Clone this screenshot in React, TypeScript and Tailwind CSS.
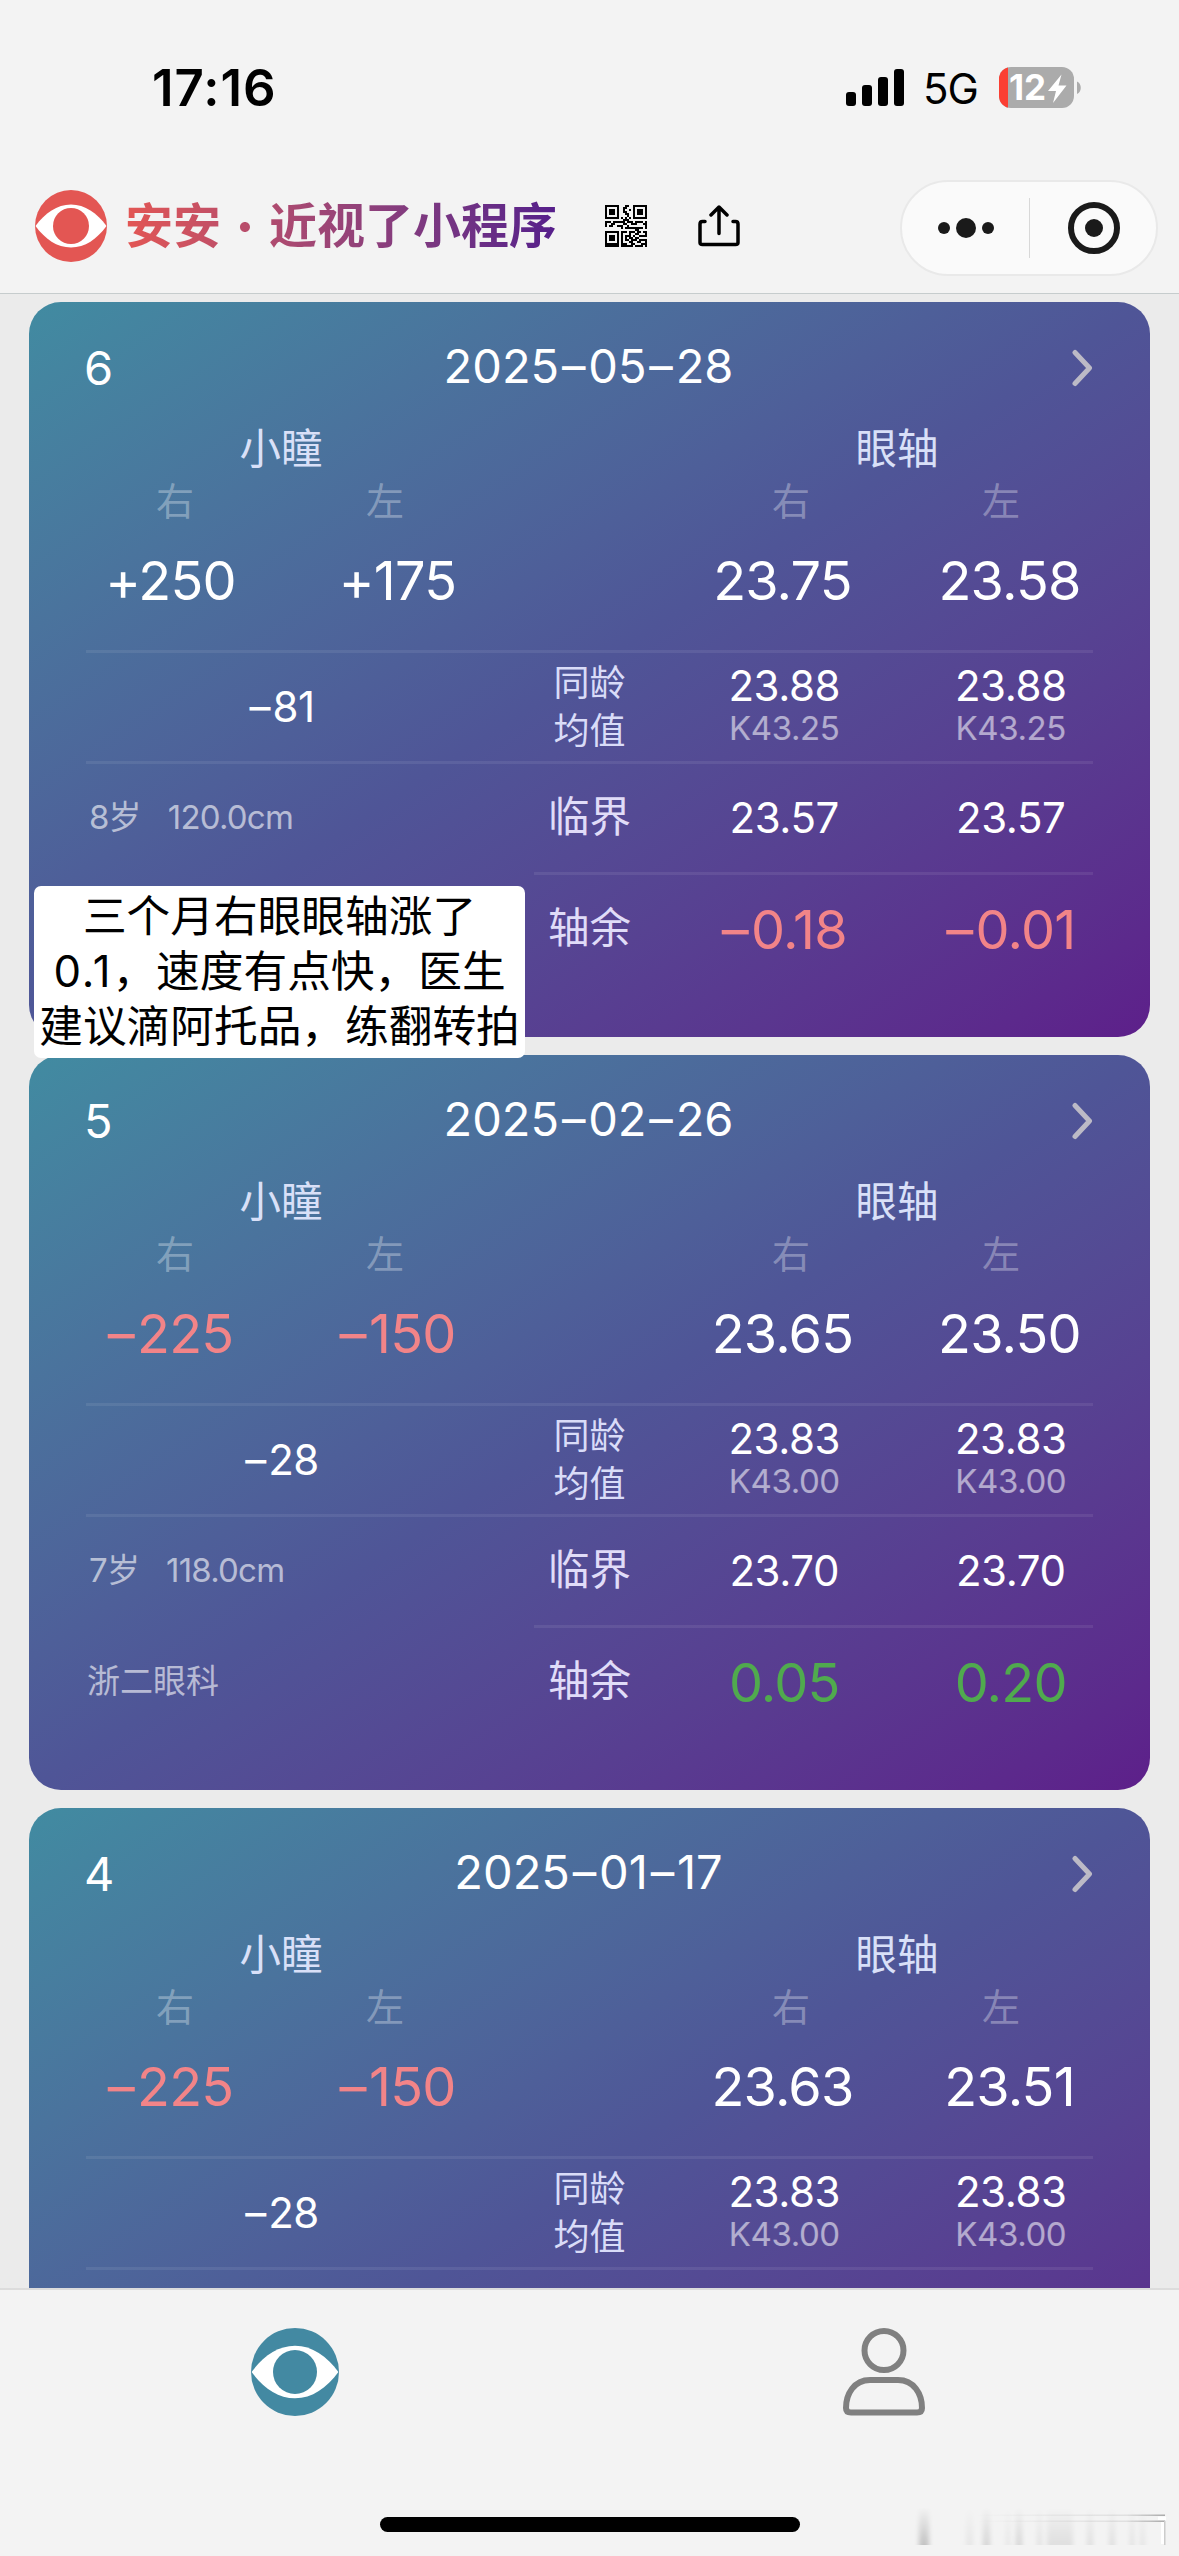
import {Fragment} from "react";
import clsx from "clsx";

type Tone = "plain" | "bad" | "good";

interface Exam {
    id: number;
    date: string;
    pupil: [string, string];
    axis: [string, string];
    pupilTone: Tone;
    delta: string;
    mean: string;
    k: string;
    detail?: {
        limit: string;
        rest: [string, string];
        restTone: Tone;
        age: string;
        height: string;
        clinic?: string;
    };
}

const exams: Exam[] = [
    {
        id: 6,
        date: "2025–05–28",
        pupil: ["+250", "+175"],
        axis: ["23.75", "23.58"],
        pupilTone: "plain",
        delta: "–81",
        mean: "23.88",
        k: "K43.25",
        detail: {
            limit: "23.57",
            rest: ["–0.18", "–0.01"],
            restTone: "bad",
            age: "8岁",
            height: "120.0cm"
        }
    },
    {
        id: 5,
        date: "2025–02–26",
        pupil: ["–225", "–150"],
        axis: ["23.65", "23.50"],
        pupilTone: "bad",
        delta: "–28",
        mean: "23.83",
        k: "K43.00",
        detail: {
            limit: "23.70",
            rest: ["0.05", "0.20"],
            restTone: "good",
            age: "7岁",
            height: "118.0cm",
            clinic: "浙二眼科"
        }
    },
    {
        id: 4,
        date: "2025–01–17",
        pupil: ["–225", "–150"],
        axis: ["23.63", "23.51"],
        pupilTone: "bad",
        delta: "–28",
        mean: "23.83",
        k: "K43.00"
    }
];

const toneClass: Record<Tone, string> = {
    plain: "text-white",
    bad: "text-[#f28488]",
    good: "text-[#50aa4e]"
};

const qrRows = [
    "111111100011001111111",
    "100000100110001000001",
    "101110100100101011101",
    "101110100110001011101",
    "101110100011001011101",
    "100000100001001000001",
    "111111101010101111111",
    "000000000111000000000",
    "111011111101110111101",
    "100110000110011100011",
    "101100111001000000001",
    "000000001011111111101",
    "000000000000000110000",
    "111111101110111011011",
    "100000101000100110001",
    "101110101011101001111",
    "101110101010110110000",
    "101110101011011101111",
    "100000101000110011001",
    "111111101110011000111",
    "111111101111110111101"
];

function EyeLogo({className}: {className: string}) {
    return (
        <svg viewBox="0 0 72 72" className={className}>
            <circle cx="36" cy="36" r="36" fill="currentColor" />
            <path d="M0.5 36C10 23 22 14.5 36 14.5S62 23 71.500 36C62 49 50 57.500 36 57.500S10 49 0.500 36Z" fill="#fff" />
            <circle cx="36" cy="36" r="18" fill="currentColor" />
        </svg>
    );
}

function QrIcon() {
    return (
        <svg viewBox="0 0 21 21" className="size-[42px]" shapeRendering="crispEdges">
            {qrRows.map((row, y) =>
                row.split("").map((cell, x) =>
                    cell === "1" ? <rect key={`${x}-${y}`} x={x} y={y} width="1" height="1" fill="#000" /> : null
                )
            )}
        </svg>
    );
}

// dashes sit a little too tight against the digits without extra room
function Figure({value}: {value: string}) {
    return value.split("–").map((part, i) => (
        <Fragment key={i}>
            {i > 0 && <span className={clsx("mr-[0.06em]", value.length > 6 && "ml-[0.06em]")}>–</span>}
            {part}
        </Fragment>
    ));
}

function StatusBar() {
    return (
        <div className="flex h-[175px] items-start pt-[58px]">
            <div className="ml-[152px] h-[60px] w-[126px] text-[51px] leading-[60px] font-semibold tracking-[1px] whitespace-nowrap">17:16</div>
            <div className="ml-[568px] flex h-12 items-end gap-[6px]">
                <div className="h-[14px] w-[10px] rounded-[3px] bg-black" />
                <div className="h-[21px] w-[10px] rounded-[3px] bg-black" />
                <div className="h-[29px] w-[10px] rounded-[3px] bg-black" />
                <div className="h-[37px] w-[10px] rounded-[3px] bg-black" />
            </div>
            <div className="ml-[19px] h-[60px] w-[76px] text-[42px] leading-[62px] tracking-[-1px]">5G</div>
            <svg viewBox="0 0 84 42" className="mt-[9px] h-[42px] w-[84px]">
                <clipPath id="battery">
                    <rect width="75" height="41" rx="12" />
                </clipPath>
                <g clipPath="url(#battery)">
                    <rect width="75" height="41" fill="#ababab" />
                    <rect width="9" height="41" fill="#fb3f33" />
                </g>
                <path d="M78 14.500c5 2 5 10.500 0 12.500Z" fill="#ababab" />
                <text x="10" y="33" fontSize="35" fontWeight="700" textLength="37" fill="#fff">
                    12
                </text>
                <path d="M62.500 7.500L49 24H57L54 36L67.500 18.500H59.500Z" fill="#fff" />
            </svg>
        </div>
    );
}

function NavBar() {
    return (
        <div className="flex h-[118px] items-start pl-[35px]">
            <EyeLogo className="mt-[15px] size-[72px] text-[#e35653]" />
            <div className="mt-[21px] ml-[18px] flex h-[60px] w-[434px] bg-linear-to-r from-[#e35653] to-[#551d8b] bg-clip-text text-[48px] leading-[60px] font-semibold text-transparent">
                <span>安安</span>
                <span className="w-12 text-center text-[64px]">·</span>
                <span>近视了小程序</span>
            </div>
            <div className="mt-[30px] ml-[46px]">
                <QrIcon />
            </div>
            <svg viewBox="0 0 42 42" className="mt-[30px] ml-[51px] size-[42px]" fill="none" stroke="#000" strokeWidth="3.500" strokeLinecap="round" strokeLinejoin="round">
                <path d="M7 16.500H4.500Q2 16.500 2 19V37.500Q2 39.500 4.500 39.500H37.500Q40 39.500 40 37.500V19Q40 16.500 37.500 16.500H35" />
                <path d="M21 28.500V2.500M13 10L21 2L29 10" />
            </svg>
            <div className="mt-[5px] ml-[160px] flex h-[96px] w-[258px] items-center rounded-full border-2 border-[#e9e9e9] bg-[#fafafa]">
                <div className="flex w-[127px] items-center justify-center gap-[6px]">
                    <div className="size-3 rounded-full bg-[#1a1a1a]" />
                    <div className="size-5 rounded-full bg-[#1a1a1a]" />
                    <div className="size-3 rounded-full bg-[#1a1a1a]" />
                </div>
                <div className="h-[60px] w-px bg-[#d8d8d8]" />
                <div className="flex flex-1 justify-center pl-[2px]">
                    <div className="flex size-[52px] items-center justify-center rounded-full border-[6px] border-[#1a1a1a]">
                        <div className="size-[18px] rounded-full bg-[#1a1a1a]" />
                    </div>
                </div>
            </div>
        </div>
    );
}

function ExamCard({exam}: {exam: Exam}) {
    const {detail} = exam;

    return (
        <div className="h-[735px] shrink-0 rounded-[32px] bg-linear-to-br from-[#418ba1] via-[#4f5597] to-[#5d1f8a] text-white">
            <div className="flex h-[128px] items-center justify-between pr-[57px] pl-[55px]">
                <div className="w-[60px] pt-1 text-[47px]">{exam.id}</div>
                <div className="text-[47px]">
                    <Figure value={exam.date} />
                </div>
                <div className="flex w-[60px] justify-end pt-1">
                    <svg viewBox="0 0 22 38" className="h-[38px] w-[22px]" fill="none" stroke="#bcbac6" strokeWidth="5" strokeLinecap="round" strokeLinejoin="round">
                        <path d="M4 3.500L18.500 19L4 34.500" />
                    </svg>
                </div>
            </div>
            <div className="flex h-[38px] items-center justify-between pr-[43px] pl-[42px] text-center text-[41.5px] text-[#d9e0f8]">
                <div className="w-[420px]">小瞳</div>
                <div className="w-[420px]">眼轴</div>
            </div>
            <div className="flex h-16 items-center pt-[2px] pr-[44px] pl-[41px] text-center text-[38px] text-white/32">
                <div className="w-[210px]">右</div>
                <div className="w-[210px]">左</div>
                <div className="ml-auto w-[210px]">右</div>
                <div className="w-[210px]">左</div>
            </div>
            <div className="flex h-[97px] items-center pr-[27px] pl-[28px] text-center text-[54px] tracking-[-0.8px]">
                <div className={clsx("w-[227px]", toneClass[exam.pupilTone])}>
                    <Figure value={exam.pupil[0]} />
                </div>
                <div className={clsx("w-[227px]", toneClass[exam.pupilTone])}>
                    <Figure value={exam.pupil[1]} />
                </div>
                <div className="ml-auto w-[227px]">{exam.axis[0]}</div>
                <div className="w-[227px]">{exam.axis[1]}</div>
            </div>

            <div className="mt-[21px] px-[57px]">
                <div className="flex h-[111px] items-center border-t-[3px] border-white/8">
                    <div className="w-[392px] pb-[2px] text-center text-[42px] tracking-[-0.5px]">
                        <Figure value={exam.delta} />
                    </div>
                    <div className="ml-[56px] w-[111px] text-center text-[36px] leading-[48px] text-[#d9dcf8]">
                        同龄
                        <br />
                        均值
                    </div>
                    <div className="-mr-[31px] ml-[26px] flex flex-1 text-center">
                        {[0, 1].map((i) => (
                            <div key={i} className="flex-1">
                                <div className="h-[43px] text-[42px] leading-[43px] tracking-[-0.4px]">{exam.mean}</div>
                                <div className="h-[43px] text-[33px] leading-[43px] tracking-[-0.4px] text-white/55">{exam.k}</div>
                            </div>
                        ))}
                    </div>
                </div>
                {detail ? (
                    <>
                        <div className="flex h-[111px] items-center border-t-[3px] border-white/8 pb-px">
                            <div className="flex w-[448px] gap-[27px] pl-[3px] text-[33px] tracking-[-0.8px] text-white/60">
                                <span>{detail.age}</span>
                                <span>{detail.height}</span>
                            </div>
                            <div className="w-[111px] text-center text-[41.5px] text-[#e0dcf8]">临界</div>
                            <div className="-mr-[31px] ml-[26px] flex flex-1 text-center text-[42px] tracking-[-0.4px]">
                                <div className="flex-1">{detail.limit}</div>
                                <div className="flex-1">{detail.limit}</div>
                            </div>
                        </div>
                        <div className="flex h-[111px]">
                            <div className="flex w-[448px] items-center pt-[3px] pl-px text-[33px] text-white/60">{detail.clinic}</div>
                            <div className="flex flex-1 items-center border-t-[3px] border-white/8">
                                <div className="w-[111px] pb-[2px] text-center text-[41.5px] text-[#e0dcf8]">轴余</div>
                                <div className={clsx("-mr-[31px] ml-[26px] flex flex-1 text-center text-[54px] tracking-[-0.8px]", toneClass[detail.restTone])}>
                                    <div className="flex-1">
                                        <Figure value={detail.rest[0]} />
                                    </div>
                                    <div className="flex-1">
                                        <Figure value={detail.rest[1]} />
                                    </div>
                                </div>
                            </div>
                        </div>
                    </>
                ) : (
                    <div className="border-t-[3px] border-white/8" />
                )}
            </div>
        </div>
    );
}

function TabBar() {
    return (
        <div className="flex h-[268px] flex-col border-t-2 border-[#dcdcdc] bg-[#f3f3f3]">
            <div className="flex pt-[38px]">
                <div className="flex flex-1 justify-center">
                    <EyeLogo className="size-[88px] text-[#4389a2]" />
                </div>
                <div className="flex flex-1 justify-center">
                    <svg viewBox="0 0 88 88" className="size-[88px]" fill="none" stroke="#808080" strokeWidth="6">
                        <circle cx="44" cy="22.500" r="19.500" />
                        <path d="M30 52H58C74 52 82 66 82 80Q82 84.500 77 84.500H11Q6 84.500 6 80C6 66 14 52 30 52Z" strokeLinejoin="round" />
                    </svg>
                </div>
            </div>
            <div className="mx-auto mt-[101px] h-[15px] w-[420px] rounded-full bg-black" />
        </div>
    );
}

function Smudge() {
    const bars = [
        {x: 5, w: 10, o: 0.2},
        {x: 52, w: 7, o: 0.05},
        {x: 69, w: 7, o: 0.12},
        {x: 92, w: 4, o: 0.06},
        {x: 102, w: 6, o: 0.12},
        {x: 123, w: 5, o: 0.07},
        {x: 133, w: 26, o: 0.08},
        {x: 173, w: 6, o: 0.08},
        {x: 195, w: 6, o: 0.08},
        {x: 216, w: 4, o: 0.08},
        {x: 226, w: 5, o: 0.06}
    ];
    return (
        <svg viewBox="0 0 256 44" className="absolute right-[9px] bottom-[9px] h-[44px] w-[256px]">
            <defs>
                <linearGradient id="fade" x1="0" y1="0" x2="0" y2="1">
                    <stop offset="0" stopColor="#000" stopOpacity="0" />
                    <stop offset="1" stopColor="#000" />
                </linearGradient>
                <linearGradient id="sweep">
                    <stop offset="0" stopColor="#000" stopOpacity="0" />
                    <stop offset="0.8" stopColor="#000" stopOpacity="0.08" />
                    <stop offset="1" stopColor="#000" stopOpacity="0.3" />
                </linearGradient>
                <filter id="soft" x="-100%" width="300%">
                    <feGaussianBlur stdDeviation="2.5 0" />
                </filter>
            </defs>
            {bars.map((bar) => (
                <rect key={bar.x} x={bar.x} y="4" width={bar.w} height="38" fill="url(#fade)" opacity={bar.o} filter="url(#soft)" />
            ))}
            <rect x="60" y="11.500" width="191" height="1.500" fill="url(#sweep)" />
            <rect x="60" y="17.500" width="191" height="1.500" fill="url(#sweep)" />
            <rect x="244" y="13.500" width="8" height="3.500" fill="#fff" />
            <rect x="247" y="19" width="3" height="22" fill="#fff" />
            <rect x="250" y="18" width="1.500" height="24" fill="#ccc" />
        </svg>
    );
}

export default function App() {
    return (
        <div className="relative flex h-[2556px] w-[1179px] flex-col overflow-hidden bg-[#f3f3f3] font-['Inter','Noto_Sans_CJK_SC',sans-serif] text-black">
            <StatusBar />
            <NavBar />
            <div className="flex h-[1995px] flex-col gap-[18px] overflow-hidden border-t border-[#c6cccd] bg-[#ebebeb] pt-2 pr-[29px] pl-[29px]">
                {exams.map((exam) => (
                    <ExamCard key={exam.id} exam={exam} />
                ))}
            </div>
            <TabBar />
            <div className="absolute top-[886px] left-[34px] h-[172px] w-[491px] rounded-[7px] bg-white pt-[3px] text-center text-[43.7px] leading-[55px] whitespace-nowrap">
                三个月右眼眼轴涨了
                <br />
                <span className="tracking-[2px]">0.1</span>，速度有点快，医生
                <br />
                建议滴阿托品，练翻转拍
            </div>
            <Smudge />
        </div>
    );
}
